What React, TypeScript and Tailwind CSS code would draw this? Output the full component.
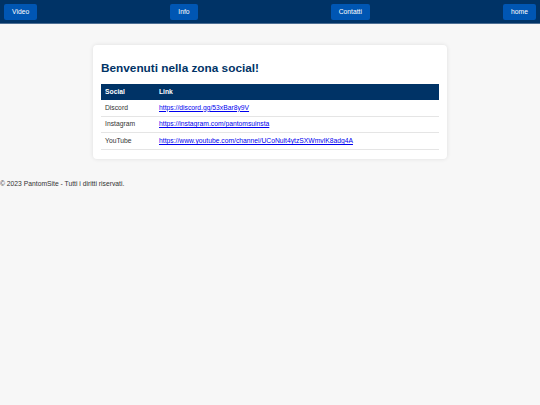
import React from 'react';

const links = [
  { name: 'Discord', url: 'https://discord.gg/53xBar8y9V' },
  { name: 'Instagram', url: 'https://instagram.com/pantomsuinsta' },
  { name: 'YouTube', url: 'https://www.youtube.com/channel/UCoNult4ytzSXWmvlK8adg4A' },
];

function NavButton({ label }: { label: string }) {
  return (
    <button className="h-4 px-[8px] pt-[2px] inline-flex items-center rounded-[2px] bg-[#0056b3] text-white text-[6.75px] leading-none">
      {label}
    </button>
  );
}

function App() {
  return (
    <div className="min-h-screen bg-[#f7f7f7] text-[#333] font-['Liberation_Sans',Arial,sans-serif]">
      <header className="h-6 bg-[#003366] border-b border-[#4d6f94] flex items-center justify-between px-1">
        <NavButton label="Video" />
        <NavButton label="Info" />
        <NavButton label="Contatti" />
        <NavButton label="home" />
      </header>

      <main className="pt-[21px]">
        <div className="w-[354px] mx-auto bg-white rounded-[4px] shadow-[0_0_4px_rgba(0,0,0,0.1)] px-2 pt-[17px] pb-[9px]">
          <h2 className="text-[11.8px] font-bold text-[#003366] leading-none mb-[9px] pt-[1px]">
            Benvenuti nella zona social!
          </h2>
          <table className="w-full text-[6.75px] border-collapse">
            <thead>
              <tr className="bg-[#003366] text-white text-left">
                <th className="w-[54px] h-4 px-[4px] font-bold">Social</th>
                <th className="h-4 px-[4px] font-bold">Link</th>
              </tr>
            </thead>
            <tbody>
              {links.map((l) => (
                <tr key={l.name} className="border-b border-[#e5e5e5]">
                  <td className="h-[16.5px] px-[4px] text-[#333]">{l.name}</td>
                  <td className="h-[16.5px] px-[4px]">
                    <a href={l.url} className="text-[#0000ee] underline">
                      {l.url}
                    </a>
                  </td>
                </tr>
              ))}
            </tbody>
          </table>
        </div>
      </main>

      <footer className="pt-[20px] text-[6.75px] text-[#333]">
        © 2023 PantomSite - Tutti i diritti riservati.
      </footer>
    </div>
  );
}

export default App;
